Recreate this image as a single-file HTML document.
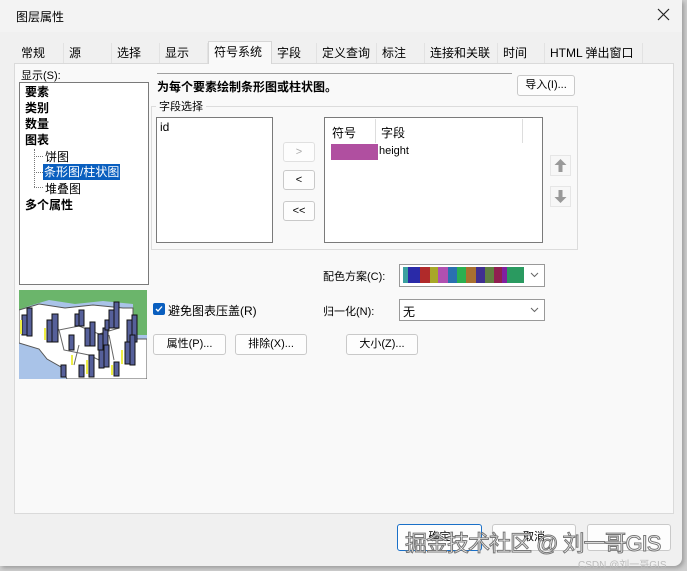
<!DOCTYPE html>
<html><head><meta charset="utf-8"><style>
*{box-sizing:border-box;margin:0;padding:0}
body{width:687px;height:570px;background:#cfcfcf;font-family:"Liberation Sans","Noto Sans CJK SC",sans-serif;font-size:12px;color:#000;position:relative;overflow:hidden}
.a{position:absolute}
#dlg{left:0;top:0;width:682px;height:566px;background:#f0f0f0;border-radius:0 0 8px 0;box-shadow:2px 2px 4px rgba(0,0,0,.25)}
#title{left:0;top:0;width:682px;height:32px;background:#f3f3f3}
.tab{top:43px;height:20px;line-height:20px;font-size:12px;padding:0 5px;border-right:1px solid #e2e2e2;background:#f0f0f0}
#panel{left:14px;top:63px;width:660px;height:451px;background:#f9f9f9;border:1px solid #dadada}
.box{background:#fff;border:1px solid #7a7a7a}
.btn{background:#fdfdfd;border:1px solid #c9c9c9;border-radius:3px;text-align:center;font-size:11px;line-height:18px}
.b{font-weight:bold;font-size:12px}
</style></head><body>
<div class="a" id="dlg"></div>
<div class="a" id="title"></div>
<div class="a" style="left:16px;top:8px;font-size:12px">图层属性</div>
<svg class="a" style="left:657px;top:8px" width="13" height="13"><path d="M1 1L12 12M12 1L1 12" stroke="#222" stroke-width="1.2"/></svg>
<div class="a" id="panel"></div>
<div class="a tab" style="left:16px;width:48px">常规</div>
<div class="a tab" style="left:64px;width:48px">源</div>
<div class="a tab" style="left:112px;width:48px">选择</div>
<div class="a tab" style="left:160px;width:48px">显示</div>
<div class="a tab" style="left:208px;top:41px;height:23px;width:64px;background:#f9f9f9;border:1px solid #d6d6d6;border-bottom:none;line-height:20px">符号系统</div>
<div class="a tab" style="left:272px;width:45px">字段</div>
<div class="a tab" style="left:317px;width:60px">定义查询</div>
<div class="a tab" style="left:377px;width:48px">标注</div>
<div class="a tab" style="left:425px;width:73px">连接和关联</div>
<div class="a tab" style="left:498px;width:47px">时间</div>
<div class="a tab" style="left:545px;width:98px">HTML 弹出窗口</div>

<div class="a" style="left:21px;top:67px;font-size:11px">显示(S):</div>
<div class="a box" style="left:19px;top:82px;width:130px;height:203px"></div>
<div class="a b" style="left:25px;top:84px;line-height:16px">要素<br>类别<br>数量<br>图表</div>
<div class="a" style="left:34px;top:149px;width:1px;height:38px;border-left:1px dotted #777"></div>
<div class="a" style="left:34px;top:156px;width:9px;border-top:1px dotted #777"></div>
<div class="a" style="left:34px;top:172px;width:9px;border-top:1px dotted #777"></div>
<div class="a" style="left:34px;top:187px;width:9px;border-top:1px dotted #777"></div>
<div class="a" style="left:45px;top:148px">饼图</div>
<div class="a" style="left:43px;top:164px;background:#0a5fbf;color:#fff;padding:0 1px;height:16px;line-height:16px">条形图/柱状图</div>
<div class="a" style="left:45px;top:180px">堆叠图</div>
<div class="a b" style="left:25px;top:196px">多个属性</div>

<svg class="a" style="left:19px;top:290px" width="128" height="89">
<rect width="128" height="89" fill="#a9c3e8"/>
<path d="M0 0h128v45h-14V14l-30-3-28 3-26-4-20 6L0 20z" fill="#6bb56b"/>
<path d="M0 20l20-6 26 4 28-3 30 3 10 0v31l14 0v40H48l-6-12-14-8-8-10-20-6z" fill="#fff" stroke="#555"/>
<path d="M30 30l10 10 20-4 20 8 20-6M40 40l5 20 25 5 20 10M60 55l-5 20M90 45l5 25" stroke="#666" fill="none"/>
<g fill="#56609a" stroke="#111"><rect x="3" y="25" width="6" height="20"/><rect x="8" y="18" width="5" height="28"/><rect x="28" y="30" width="6" height="22"/><rect x="33" y="24" width="6" height="28"/><rect x="56" y="24" width="5" height="12"/><rect x="60" y="20" width="5" height="16"/><rect x="90" y="20" width="5" height="18"/><rect x="95" y="12" width="5" height="26"/><rect x="79" y="44" width="5" height="16"/><rect x="84" y="38" width="5" height="22"/><rect x="108" y="30" width="5" height="22"/><rect x="113" y="25" width="5" height="27"/><rect x="86" y="30" width="4" height="10"/><rect x="66" y="38" width="5" height="18"/><rect x="71" y="32" width="5" height="24"/><rect x="80" y="60" width="5" height="18"/><rect x="85" y="55" width="5" height="22"/><rect x="106" y="52" width="5" height="22"/><rect x="111" y="45" width="5" height="30"/><rect x="60" y="75" width="5" height="12"/><rect x="70" y="65" width="5" height="22"/><rect x="95" y="72" width="5" height="14"/><rect x="42" y="75" width="5" height="12"/><rect x="50" y="45" width="5" height="15"/></g>
<g fill="#ee4"><rect x="1" y="30" width="2" height="14"/><rect x="25" y="38" width="2" height="12"/><rect x="67" y="70" width="2" height="14"/><rect x="102" y="60" width="2" height="14"/><rect x="92" y="75" width="2" height="10"/><rect x="52" y="65" width="2" height="10"/></g>
</svg>

<div class="a" style="left:157px;top:73px;width:355px;border-top:1px solid #a0a0a0"></div>
<div class="a b" style="left:157px;top:78px">为每个要素绘制条形图或柱状图。</div>
<div class="a btn" style="left:517px;top:75px;width:58px;height:21px;line-height:19px">导入(I)...</div>

<div class="a" style="left:151px;top:106px;width:427px;height:144px;border:1px solid #dcdcdc"></div>
<div class="a" style="left:156px;top:98px;background:#f9f9f9;padding:0 3px;font-size:11px">字段选择</div>
<div class="a box" style="left:156px;top:117px;width:117px;height:126px"></div>
<div class="a" style="left:160px;top:120px">id</div>
<div class="a btn" style="left:283px;top:142px;width:32px;height:20px;color:#aaa;border-color:#e0e0e0">&gt;</div>
<div class="a btn" style="left:283px;top:170px;width:32px;height:20px">&lt;</div>
<div class="a btn" style="left:283px;top:201px;width:32px;height:20px">&lt;&lt;</div>
<div class="a box" style="left:324px;top:117px;width:219px;height:126px"></div>
<div class="a" style="left:332px;top:124px">符号</div>
<div class="a" style="left:381px;top:124px">字段</div>
<div class="a" style="left:375px;top:119px;height:24px;border-left:1px solid #ddd"></div>
<div class="a" style="left:522px;top:119px;height:24px;border-left:1px solid #ddd"></div>
<div class="a" style="left:331px;top:144px;width:47px;height:16px;background:#b04fa0"></div>
<div class="a" style="left:379px;top:145px;font-size:11px">height</div>
<svg class="a" style="left:550px;top:155px" width="21" height="52"><rect x=".5" y=".5" width="20" height="20" fill="#f7f7f7" stroke="#e6e6e6"/><path d="M10.5 4l6 6h-4v7h-4v-7h-4z" fill="#999"/><rect x=".5" y="31.5" width="20" height="20" fill="#f7f7f7" stroke="#e6e6e6"/><path d="M10.5 48l6-6h-4v-7h-4v7h-4z" fill="#999"/></svg>

<div class="a" style="left:323px;top:268px;font-size:11px">配色方案(C):</div>
<div class="a" style="left:399px;top:264px;width:146px;height:23px;background:#fff;border:1px solid #999"></div>
<div class="a" style="left:403px;top:267px;width:121px;height:16px;background:linear-gradient(90deg,#3aa0a0 0 5px,#2a2aa8 5px 17px,#b02a2a 17px 27px,#a8a828 27px 35px,#b050b0 35px 45px,#2a70b0 45px 54px,#2ab050 54px 63px,#a87030 63px 73px,#403090 73px 82px,#608040 82px 91px,#902050 91px 99px,#8020a0 99px 104px,#2a9a60 104px)"></div>
<svg class="a" style="left:530px;top:272px" width="9" height="6"><path d="M1 1l3.5 3.5L8 1" stroke="#666" fill="none"/></svg>
<div class="a" style="left:323px;top:303px;font-size:11px">归一化(N):</div>
<div class="a" style="left:399px;top:299px;width:146px;height:22px;background:#fff;border:1px solid #999"></div>
<div class="a" style="left:403px;top:303px">无</div>
<svg class="a" style="left:530px;top:307px" width="9" height="6"><path d="M1 1l3.5 3.5L8 1" stroke="#666" fill="none"/></svg>

<div class="a" style="left:153px;top:303px;width:12px;height:12px;background:#0a5fbf;border-radius:2px"></div>
<svg class="a" style="left:153px;top:303px" width="12" height="12"><path d="M3 6l2 2 4-4.5" stroke="#fff" stroke-width="1.3" fill="none"/></svg>
<div class="a" style="left:168px;top:302px">避免图表压盖(R)</div>
<div class="a btn" style="left:153px;top:334px;width:73px;height:21px">属性(P)...</div>
<div class="a btn" style="left:235px;top:334px;width:72px;height:21px">排除(X)...</div>
<div class="a btn" style="left:346px;top:334px;width:72px;height:21px">大小(Z)...</div>

<div class="a btn" style="left:397px;top:524px;width:85px;height:27px;border:1px solid #1a70c8;line-height:25px">确定</div>
<div class="a btn" style="left:492px;top:524px;width:84px;height:27px;line-height:25px">取消</div>
<div class="a btn" style="left:587px;top:524px;width:84px;height:27px;line-height:25px"></div>
<div class="a" style="left:405px;top:526px;font-size:22px;color:#fff;-webkit-text-stroke:1px #777;white-space:nowrap;letter-spacing:-1px">掘金技术社区 @ 刘一哥GIS</div>
<div class="a" style="left:578px;top:556px;font-size:10px;color:#bbb;white-space:nowrap">CSDN @刘一哥GIS</div>
</body></html>
